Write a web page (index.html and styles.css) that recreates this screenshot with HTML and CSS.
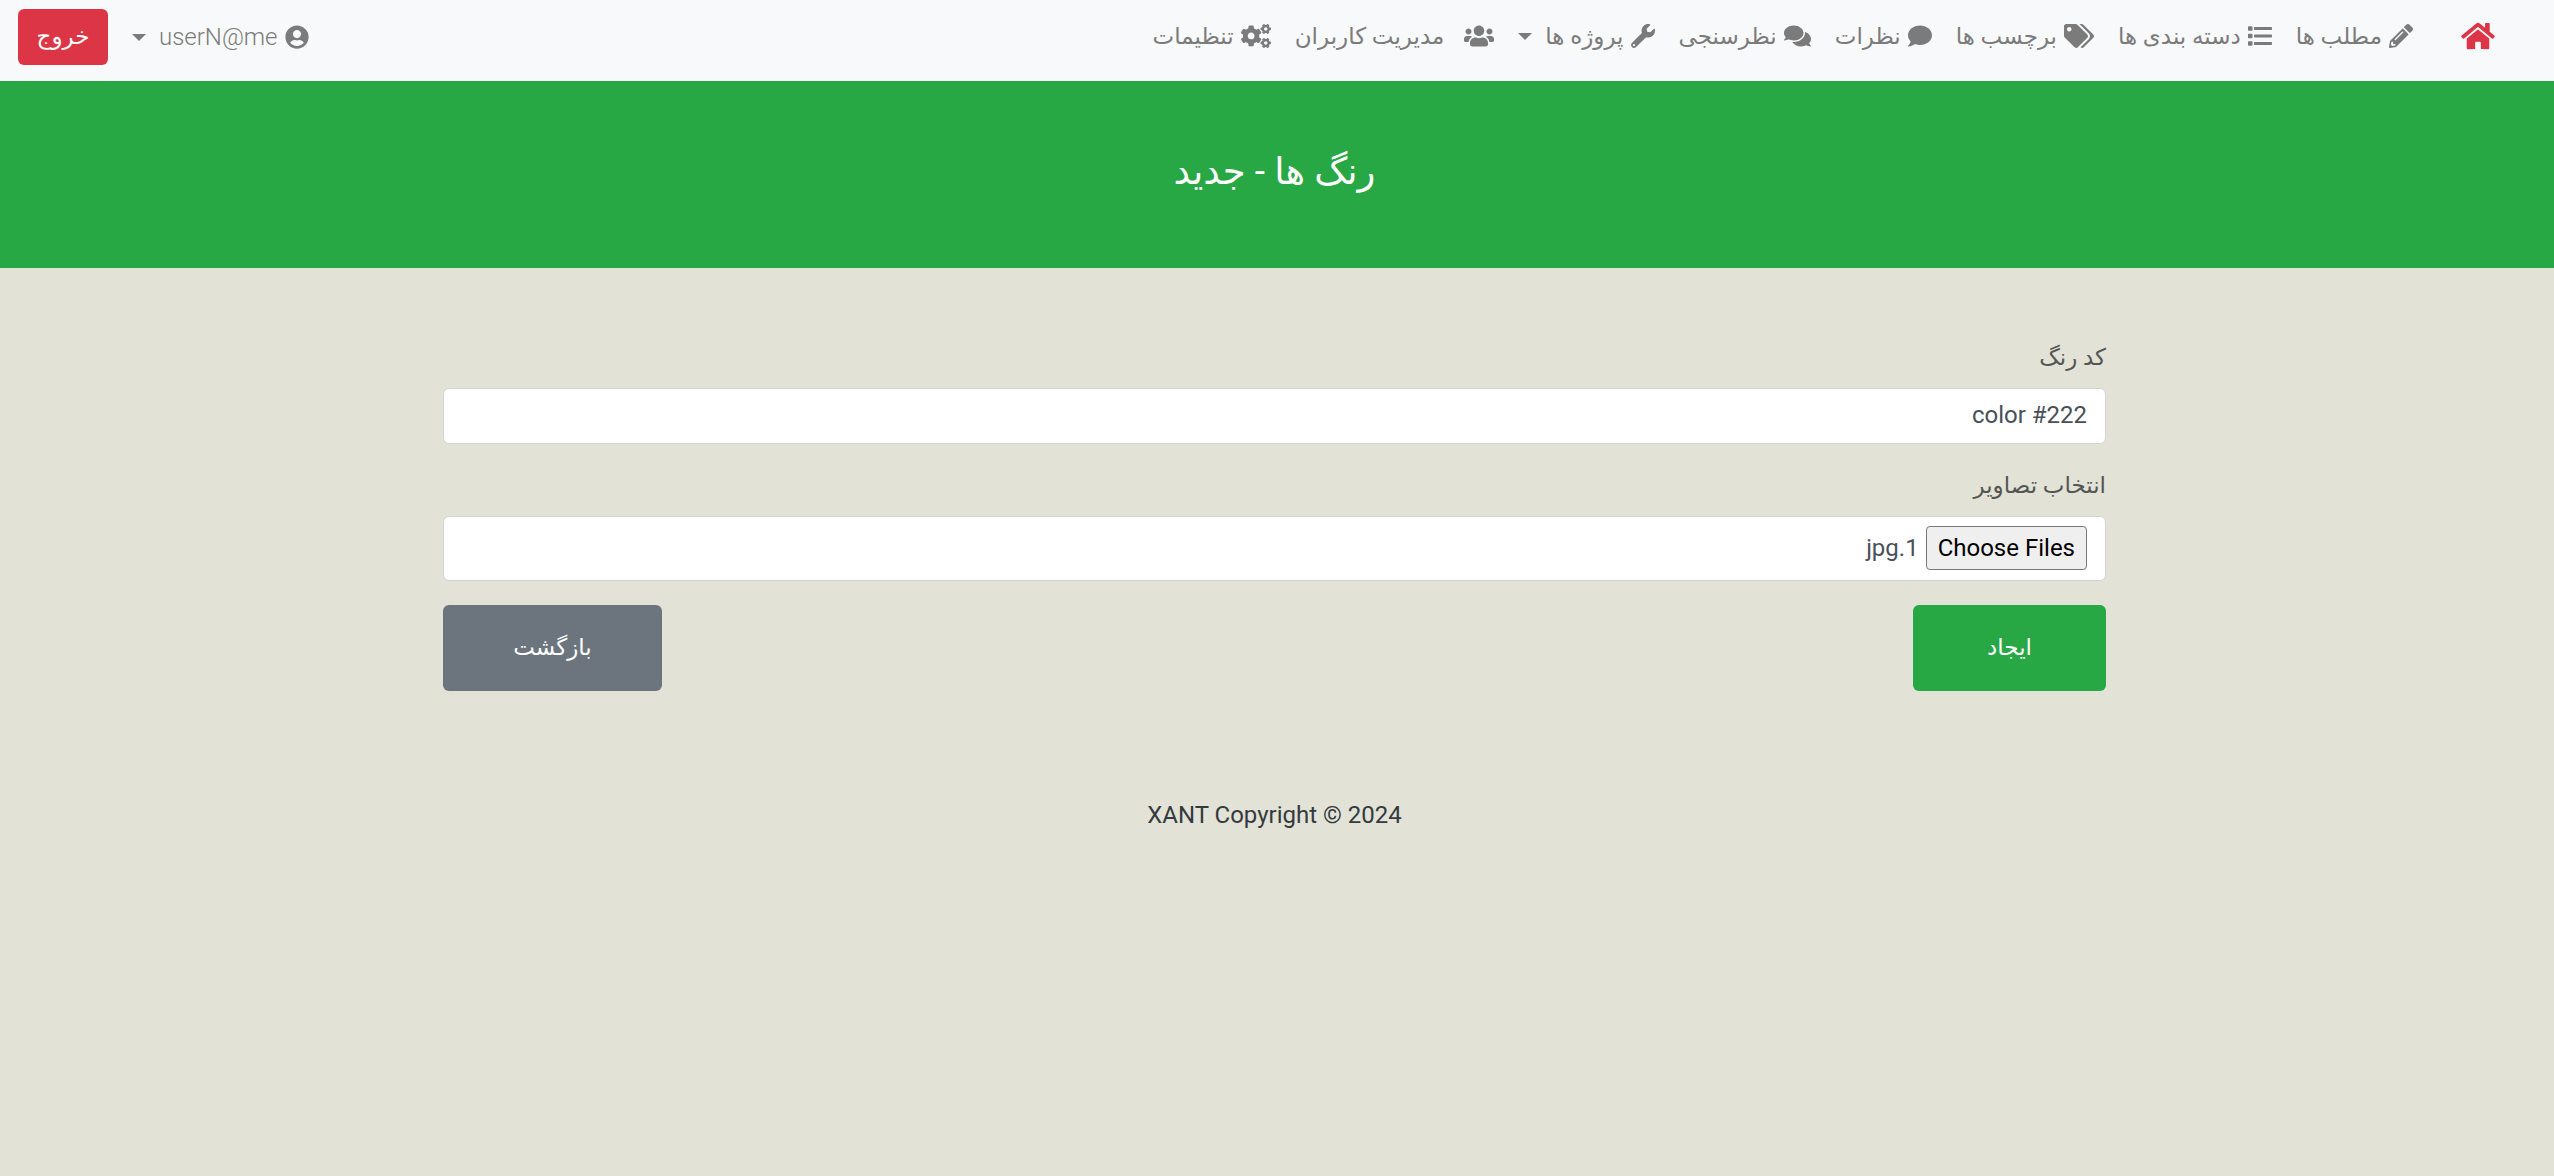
FILE: index.html
```html
<!DOCTYPE html>
<html lang="fa" dir="rtl">
<head>
<meta charset="utf-8">
<meta name="viewport" content="width=device-width, initial-scale=1">
<title>رنگ ها - جدید</title>
<link rel="stylesheet" href="styles.css">
</head>
<body>
<svg class="sprite" aria-hidden="true">
  <symbol id="home" viewBox="0 0 576 512"><path d="M280.37 148.26L96 300.11V464a16 16 0 0 0 16 16l112.06-.29a16 16 0 0 0 15.92-16V368a16 16 0 0 1 16-16h64a16 16 0 0 1 16 16v95.64a16 16 0 0 0 16 16.05L464 480a16 16 0 0 0 16-16V300L295.67 148.26a12.19 12.19 0 0 0-15.3 0zM571.6 251.47L488 182.56V44.05a12 12 0 0 0-12-12h-56a12 12 0 0 0-12 12v72.61L318.47 43a48 48 0 0 0-61 0L4.34 251.47a12 12 0 0 0-1.6 16.9l25.5 31A12 12 0 0 0 45.15 301l235.22-193.74a12.19 12.19 0 0 1 15.3 0L530.9 301a12 12 0 0 0 16.9-1.6l25.5-31a12 12 0 0 0-1.7-16.93z"/></symbol>
  <symbol id="pencil" viewBox="0 0 512 512"><path d="M497.9 142.1l-46.1 46.1c-4.7 4.7-12.3 4.7-17 0l-111-111c-4.7-4.7-4.7-12.3 0-17l46.1-46.1c18.7-18.7 49.1-18.7 67.9 0l60.1 60.1c18.8 18.7 18.8 49.1 0 67.9zM284.2 99.8L21.6 362.4.4 483.9c-2.9 16.4 11.4 30.6 27.8 27.8l121.5-21.3 262.6-262.6c4.7-4.7 4.7-12.3 0-17l-111-111c-4.8-4.7-12.4-4.7-17.1 0zM124.1 339.9c-5.5-5.5-5.5-14.3 0-19.8l154-154c5.5-5.5 14.3-5.5 19.8 0s5.5 14.3 0 19.8l-154 154c-5.5 5.5-14.3 5.5-19.8 0zM88 424h48v36.3l-64.5 11.3-31.1-31.1L51.7 376H88v48z"/></symbol>
  <symbol id="list" viewBox="0 0 512 512"><path d="M16 48h64a16 16 0 0 1 16 16v64a16 16 0 0 1-16 16H16a16 16 0 0 1-16-16V64a16 16 0 0 1 16-16zM16 208h64a16 16 0 0 1 16 16v64a16 16 0 0 1-16 16H16a16 16 0 0 1-16-16v-64a16 16 0 0 1 16-16zM16 368h64a16 16 0 0 1 16 16v64a16 16 0 0 1-16 16H16a16 16 0 0 1-16-16v-64a16 16 0 0 1 16-16zM144 64h352a16 16 0 0 1 16 16v32a16 16 0 0 1-16 16H144a16 16 0 0 1-16-16V80a16 16 0 0 1 16-16zM144 224h352a16 16 0 0 1 16 16v32a16 16 0 0 1-16 16H144a16 16 0 0 1-16-16v-32a16 16 0 0 1 16-16zM144 384h352a16 16 0 0 1 16 16v32a16 16 0 0 1-16 16H144a16 16 0 0 1-16-16v-32a16 16 0 0 1 16-16z"/></symbol>
  <symbol id="tags" viewBox="0 0 640 512"><path d="M497.941 225.941L286.059 14.059A48 48 0 0 0 252.118 0H48C21.49 0 0 21.49 0 48v204.118a48 48 0 0 0 14.059 33.941l211.882 211.882c18.744 18.745 49.136 18.746 67.882 0l204.118-204.118c18.745-18.745 18.745-49.137 0-67.882zM112 160c-26.51 0-48-21.49-48-48s21.49-48 48-48 48 21.49 48 48-21.49 48-48 48zm513.941 133.823L421.823 497.941c-18.745 18.745-49.137 18.745-67.882 0l-.36-.36L527.64 323.522c16.999-16.999 26.36-39.6 26.36-63.64s-9.362-46.641-26.36-63.64L331.397 0h48.721a48 48 0 0 1 33.941 14.059l211.882 211.882c18.745 18.745 18.745 49.137 0 67.882z"/></symbol>
  <symbol id="comment" viewBox="0 0 512 512"><path d="M256 32C114.600 32 0 125.100 0 240c0 49.600 21.400 95 57 130.700C44.500 421.100 2.700 466 2.200 466.500c-2.200 2.300-2.800 5.700-1.500 8.700S4.800 480 8 480c66.300 0 116-31.800 140.600-51.400 32.700 12.300 69 19.400 107.400 19.400 141.400 0 256-93.100 256-208S397.400 32 256 32z"/></symbol>
  <symbol id="comments" viewBox="0 0 576 512"><path d="M416 192c0-88.400-93.100-160-208-160S0 103.600 0 192c0 34.300 14.100 65.900 38 92-13.400 30.200-35.500 54.200-35.800 54.500-2.200 2.300-2.800 5.700-1.500 8.700S4.800 352 8 352c36.600 0 66.900-12.300 88.700-25 32.200 15.700 70.300 25 111.300 25 114.900 0 208-71.600 208-160zm122 220c23.900-26 38-57.700 38-92 0-66.900-53.500-124.200-129.300-148.100.9 6.600 1.300 13.300 1.300 20.100 0 105.900-107.700 192-240 192-10.800 0-21.300-.8-31.700-1.900C207.800 439.600 281.800 480 368 480c41 0 79.100-9.200 111.300-25 21.800 12.700 52.100 25 88.700 25 3.200 0 6.100-1.900 7.300-4.800 1.300-2.900.7-6.300-1.500-8.700-.3-.3-22.400-24.200-35.800-54.500z"/></symbol>
  <symbol id="wrench" viewBox="0 0 512 512"><path d="M507.730 109.100c-2.240-9.030-13.540-12.090-20.120-5.510l-74.360 74.360-67.880-11.310-11.310-67.880 74.360-74.360c6.620-6.620 3.430-17.900-5.660-20.160-47.380-11.740-99.550.91-136.580 37.930-39.640 39.640-50.550 97.100-34.050 147.200L18.740 402.760c-24.990 24.990-24.990 65.510 0 90.500 24.990 24.990 65.510 24.990 90.500 0l213.210-213.210c50.120 16.710 107.470 5.680 147.370-34.220 37.070-37.070 49.700-89.320 37.910-136.730zM64 472c-13.250 0-24-10.750-24-24 0-13.260 10.750-24 24-24s24 10.740 24 24c0 13.250-10.750 24-24 24z"/></symbol>
  <symbol id="users" viewBox="0 0 640 512"><path d="M96 224c35.300 0 64-28.700 64-64s-28.700-64-64-64-64 28.700-64 64 28.700 64 64 64zm448 0c35.300 0 64-28.700 64-64s-28.700-64-64-64-64 28.700-64 64 28.700 64 64 64zm32 32h-64c-17.600 0-33.500 7.100-45.100 18.600 40.300 22.100 68.900 62 75.100 109.400h66c17.700 0 32-14.300 32-32v-32c0-35.300-28.700-64-64-64zm-256 0c61.900 0 112-50.100 112-112S381.900 32 320 32 208 82.100 208 144s50.100 112 112 112zm76.800 32h-8.300c-20.800 10-43.900 16-68.500 16s-47.600-6-68.500-16h-8.300C179.600 288 128 339.600 128 403.200V432c0 26.500 21.500 48 48 48h288c26.500 0 48-21.500 48-48v-28.800c0-63.600-51.600-115.200-115.200-115.200zm-223.700-13.400C161.500 263.100 145.600 256 128 256H64c-35.300 0-64 28.700-64 64v32c0 17.700 14.300 32 32 32h65.900c6.300-47.400 34.900-87.300 75.200-109.400z"/></symbol>
  <symbol id="cogs" viewBox="0 0 640 512"><path d="M512.1 191l-8.200 14.300c-3 5.300-9.400 7.500-15.100 5.400-11.800-4.400-22.600-10.700-32.100-18.600-4.600-3.800-5.800-10.500-2.800-15.700l8.200-14.300c-6.900-8-12.300-17.300-15.900-27.400h-16.500c-6 0-11.200-4.300-12.200-10.300-2-12-2.100-24.600 0-37.100 1-6 6.200-10.400 12.200-10.400h16.500c3.600-10.100 9-19.400 15.900-27.400l-8.200-14.300c-3-5.200-1.900-11.900 2.800-15.700 9.500-7.900 20.400-14.200 32.100-18.600 5.700-2.100 12.100.1 15.100 5.400l8.200 14.300c10.500-1.900 21.200-1.900 31.700 0L552 6.300c3-5.300 9.400-7.500 15.100-5.400 11.800 4.400 22.600 10.700 32.100 18.600 4.600 3.800 5.800 10.500 2.800 15.700l-8.200 14.300c6.900 8 12.300 17.300 15.900 27.400h16.500c6 0 11.200 4.300 12.200 10.300 2 12 2.100 24.600 0 37.100-1 6-6.200 10.400-12.200 10.400h-16.500c-3.600 10.100-9 19.400-15.900 27.400l8.200 14.300c3 5.200 1.900 11.900-2.800 15.700-9.500 7.900-20.400 14.200-32.100 18.600-5.700 2.100-12.100-.1-15.100-5.400l-8.200-14.300c-10.400 1.900-21.200 1.900-31.700 0zm-10.500-58.800c38.500 29.600 82.400-14.300 52.800-52.800-38.500-29.700-82.400 14.300-52.800 52.800zM386.300 286.100l33.700 16.800c10.100 5.800 14.500 18.100 10.500 29.100-8.900 24.200-26.400 46.400-42.600 65.800-7.400 8.900-20.200 11.100-30.300 5.300l-29.100-16.800c-16 13.700-34.600 24.600-54.900 31.700v33.600c0 11.600-8.300 21.600-19.700 23.600-24.600 4.200-50.400 4.400-75.900 0-11.500-2-20-11.900-20-23.600V418c-20.300-7.200-38.900-18-54.900-31.700L74 403c-10 5.800-22.900 3.600-30.300-5.300-16.200-19.400-33.300-41.600-42.200-65.700-4-10.900.4-23.200 10.500-29.100l33.300-16.800c-3.900-20.900-3.900-42.400 0-63.400L12 205.800c-10.100-5.800-14.600-18.100-10.500-29 8.900-24.200 26-46.400 42.200-65.800 7.400-8.900 20.200-11.100 30.300-5.300l29.100 16.800c16-13.700 34.600-24.600 54.900-31.700V57.100c0-11.500 8.200-21.500 19.600-23.500 24.600-4.200 50.500-4.400 76-.1 11.500 2 20 11.900 20 23.600v33.600c20.300 7.200 38.900 18 54.900 31.700l29.100-16.800c10-5.800 22.900-3.600 30.300 5.300 16.200 19.400 33.200 41.600 42.100 65.800 4 10.900.1 23.200-10 29.100l-33.700 16.800c3.900 21 3.900 42.500 0 63.500zm-117.600 21.100c59.200-77-28.700-164.900-105.700-105.700-59.200 77 28.700 164.900 105.700 105.700zm243.400 182.700l-8.200 14.300c-3 5.300-9.400 7.500-15.100 5.400-11.800-4.400-22.600-10.700-32.100-18.600-4.600-3.800-5.800-10.500-2.800-15.700l8.200-14.300c-6.900-8-12.300-17.300-15.900-27.400h-16.500c-6 0-11.200-4.300-12.200-10.300-2-12-2.100-24.600 0-37.100 1-6 6.200-10.400 12.200-10.400h16.500c3.600-10.100 9-19.400 15.900-27.400l-8.200-14.300c-3-5.200-1.900-11.900 2.800-15.700 9.500-7.900 20.400-14.200 32.100-18.600 5.700-2.100 12.100.1 15.100 5.400l8.200 14.300c10.500-1.900 21.200-1.900 31.700 0l8.200-14.300c3-5.300 9.400-7.500 15.100-5.400 11.800 4.400 22.600 10.700 32.100 18.600 4.600 3.800 5.800 10.500 2.800 15.700l-8.200 14.300c6.900 8 12.300 17.300 15.900 27.400h16.500c6 0 11.200 4.300 12.200 10.300 2 12 2.100 24.600 0 37.100-1 6-6.200 10.400-12.200 10.400h-16.500c-3.600 10.100-9 19.400-15.900 27.400l8.200 14.300c3 5.200 1.900 11.900-2.800 15.700-9.500 7.900-20.400 14.200-32.100 18.600-5.700 2.100-12.100-.1-15.100-5.400l-8.200-14.300c-10.400 1.900-21.200 1.900-31.700 0zM501.600 431c38.500 29.600 82.400-14.300 52.800-52.800-38.500-29.600-82.400 14.300-52.800 52.800z"/></symbol>
  <symbol id="user" viewBox="0 0 496 512"><path d="M248 8C111 8 0 119 0 256s111 248 248 248 248-111 248-248S385 8 248 8zm0 96c48.600 0 88 39.400 88 88s-39.400 88-88 88-88-39.400-88-88 39.400-88 88-88zm0 344c-58.700 0-111.300-26.600-146.500-68.200 18.800-35.400 55.600-59.800 98.500-59.800 2.400 0 4.800.4 7.100 1.100 13 4.200 26.600 6.900 40.900 6.900 14.300 0 28-2.700 40.900-6.900 2.300-.7 4.700-1.100 7.100-1.100 42.900 0 79.700 24.400 98.500 59.800C359.300 421.400 306.700 448 248 448z"/></symbol>
</svg>

<nav class="navbar">
  <a class="brand" href="#" aria-label="خانه"><svg class="icon icon-home"><use href="#home"/></svg></a>
  <ul class="nav">
    <li><a class="nav-link" href="#"><svg class="icon"><use href="#pencil"/></svg><span>مطلب ها</span></a></li>
    <li><a class="nav-link" href="#"><svg class="icon"><use href="#list"/></svg><span>دسته بندی ها</span></a></li>
    <li><a class="nav-link" href="#"><svg class="icon icon-wide"><use href="#tags"/></svg><span>برچسب ها</span></a></li>
    <li><a class="nav-link" href="#"><svg class="icon"><use href="#comment"/></svg><span>نظرات</span></a></li>
    <li><a class="nav-link" href="#"><svg class="icon icon-mid"><use href="#comments"/></svg><span>نظرسنجی</span></a></li>
    <li><a class="nav-link dropdown" href="#"><svg class="icon"><use href="#wrench"/></svg><span>پروژه ها</span></a></li>
    <li><a class="nav-link nav-users" href="#"><svg class="icon icon-wide"><use href="#users"/></svg><span>مدیریت کاربران</span></a></li>
    <li><a class="nav-link" href="#"><svg class="icon icon-wide"><use href="#cogs"/></svg><span>تنظیمات</span></a></li>
  </ul>
  <div class="account">
    <a class="nav-link dropdown" href="#"><svg class="icon"><use href="#user"/></svg><span class="latin">userN@me</span></a>
    <button class="btn btn-logout" type="button">خروج</button>
  </div>
</nav>

<header class="hero"><h1>رنگ ها - جدید</h1></header>

<main class="page">
  <form class="form">
    <div class="field">
      <label for="code">کد رنگ</label>
      <input class="control" id="code" type="text" value="color #222">
    </div>
    <div class="field">
      <label for="images">انتخاب تصاویر</label>
      <input class="control control-file" id="images" type="file" accept="image/*" multiple>
    </div>
    <div class="actions">
      <button class="btn btn-create" type="submit">ایجاد</button>
      <button class="btn btn-back" type="button">بازگشت</button>
    </div>
  </form>
</main>

<footer class="footer">XANT Copyright © 2024</footer>
<script src="script.js"></script>
</body>
</html>
```
FILE: styles.css
```css
* { box-sizing: border-box; }

body {
  margin: 0;
  background: #e2e3d6;
  color: #212529;
  font-family: Roboto, "DejaVu Sans", sans-serif;
  font-size: 24px;
  line-height: 36px;
}

.sprite { display: none; }

.icon {
  width: 24px;
  height: 24px;
  flex: none;
  fill: currentColor;
}
.icon-mid { width: 27px; }
.icon-wide { width: 30px; }
.icon-home { width: 34px; height: 30px; }

.navbar {
  display: flex;
  align-items: flex-start;
  min-height: 81px;
  padding: 9px 59px 12px 18px;
  background: #f8f9fa;
}
.brand {
  display: flex;
  padding: 12px 0;
  margin-left: 36px;
  color: #dc3545;
}
.nav {
  display: flex;
  margin: 0;
  padding: 0;
  list-style: none;
}
.nav-link {
  display: flex;
  align-items: center;
  gap: 7px;
  padding: 8px 12px;
  color: #7b7b7b;
  text-decoration: none;
  white-space: nowrap;
}
.nav-link span {
  padding-top: 2px;
  font-size: 23px;
}
.nav-link .latin {
  padding-top: 0;
  font-size: 24px;
  font-weight: 300;
}
.nav-users { gap: 20px; }
.dropdown::after {
  content: "";
  margin-right: 6px;
  border: 7px solid transparent;
  border-top-color: currentColor;
  border-bottom: 0;
}
.account {
  display: flex;
  align-items: center;
  gap: 12px;
  margin-right: auto;
}

.btn {
  border: 0;
  border-radius: 6px;
  color: #fff;
  font: inherit;
  font-size: 23px;
  cursor: pointer;
}
.btn-logout {
  width: 90px;
  height: 56px;
  background: #dc3545;
}

.hero {
  padding: 70px 5px 75px 0;
  background: #28a745;
  color: #fff;
  text-align: center;
}
.hero h1 {
  margin: 0;
  font-size: 37px;
  font-weight: 400;
  line-height: 42px;
}

.page { padding: 72px 5px 0 0; }
.form {
  width: 100%;
  max-width: 1663px;
  margin: 0 auto;
}
.field { margin-bottom: 24px; }
.field label {
  display: block;
  margin-bottom: 12px;
  color: #555;
  font-size: 23px;
}
.control {
  display: block;
  width: 100%;
  height: 56px;
  padding: 8px 18px 10px;
  border: 1px solid #ced4da;
  border-radius: 6px;
  background: #fff;
  color: #495057;
  font: inherit;
}
.control-file {
  height: 65px;
  padding: 9px 18px;
}
.control-file::file-selector-button {
  margin: 0 0 0 7px;
  padding: 3px 11px;
  border: 1px solid #767676;
  border-radius: 4px;
  background: #efefef;
  color: #000;
  font: inherit;
}
.actions {
  display: flex;
  justify-content: space-between;
}
.actions .btn { height: 86px; }
.btn-create { width: 193px; background: #28a745; }
.btn-back { width: 219px; background: #6c757d; }

.footer {
  padding: 106px 5px 24px 0;
  color: #343a40;
  text-align: center;
}
```
FILE: script.js
```js
const files = new DataTransfer();
files.items.add(new File([""], "1.jpg", { type: "image/jpeg" }));
document.getElementById("images").files = files.files;
```
